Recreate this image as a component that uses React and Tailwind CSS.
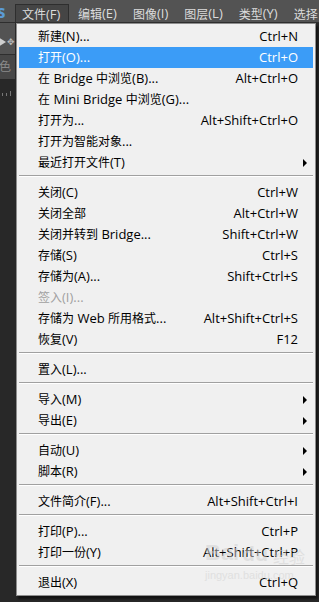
import React from "react";

const font = { fontFamily: '"Open Sans", "Noto Sans CJK SC", sans-serif' };

const menuItems = [
  { label: "新建(N)...", sc: "Ctrl+N" },
  { label: "打开(O)...", sc: "Ctrl+O", active: true },
  { label: "在 Bridge 中浏览(B)...", sc: "Alt+Ctrl+O" },
  { label: "在 Mini Bridge 中浏览(G)..." },
  { label: "打开为...", sc: "Alt+Shift+Ctrl+O" },
  { label: "打开为智能对象..." },
  { label: "最近打开文件(T)", sub: true },
  "sep",
  { label: "关闭(C)", sc: "Ctrl+W" },
  { label: "关闭全部", sc: "Alt+Ctrl+W" },
  { label: "关闭并转到 Bridge...", sc: "Shift+Ctrl+W" },
  { label: "存储(S)", sc: "Ctrl+S" },
  { label: "存储为(A)...", sc: "Shift+Ctrl+S" },
  { label: "签入(I)...", disabled: true },
  { label: "存储为 Web 所用格式...", sc: "Alt+Shift+Ctrl+S" },
  { label: "恢复(V)", sc: "F12" },
  "sep",
  { label: "置入(L)..." },
  "sep",
  { label: "导入(M)", sub: true },
  { label: "导出(E)", sub: true },
  "sep",
  { label: "自动(U)", sub: true },
  { label: "脚本(R)", sub: true },
  "sep",
  { label: "文件简介(F)...", sc: "Alt+Shift+Ctrl+I" },
  "sep",
  { label: "打印(P)...", sc: "Ctrl+P" },
  { label: "打印一份(Y)", sc: "Alt+Shift+Ctrl+P" },
  "sep",
  { label: "退出(X)", sc: "Ctrl+Q" },
];

const topMenus = ["编辑(E)", "图像(I)", "图层(L)", "类型(Y)", "选择"];

// CJK runs are set a size smaller than the latin parts, like YaHei on Windows
function Mixed({ text }) {
  const parts = text.split(/([\u3000-\u9fff]+)/).filter(Boolean);
  return parts.map((p, i) =>
    /[\u3000-\u9fff]/.test(p) ? (
      <span key={i} className="text-[12px]" style={{ fontFamily: '"Noto Sans CJK SC", sans-serif' }}>
        {p}
      </span>
    ) : (
      <span key={i}>{p}</span>
    )
  );
}

function Arrow() {
  return (
    <svg width="4" height="8" viewBox="0 0 4 8" className="ml-[5px]">
      <path d="M0 0 L4 4 L0 8 Z" fill="#000" />
    </svg>
  );
}

function MenuRow({ item }) {
  const color = item.active ? "text-white" : item.disabled ? "text-[#a0a0a0]" : "text-black";
  return (
    <div className={`h-[21px] flex items-center pl-[19px] leading-none ${item.active ? "bg-[#3b9cf7]" : ""} ${color}`}>
      <span className="flex-1 whitespace-nowrap">
        <Mixed text={item.label} />
      </span>
      {item.sc && <span className="whitespace-nowrap">{item.sc}</span>}
      <span className="w-[15px] flex items-center">{item.sub && <Arrow />}</span>
    </div>
  );
}

export default function App() {
  return (
    <div className="relative w-[319px] h-[602px] overflow-hidden bg-[#282828] text-[13px]" style={font}>
      {/* top menu bar */}
      <div className="h-[23px] bg-[#535353] border-b border-[#2e2e2e] flex items-stretch text-[#dcdcdc] leading-none">
        <div className="w-[15px] shrink-0 overflow-hidden flex items-center">
          <span className="text-[17px] font-bold text-[#5b9bd5] -ml-[3px]">s</span>
        </div>
        <div className="shrink-0 mt-[4px] w-[54px] pl-[6px] pt-[1px] flex items-center bg-[#454545] border border-b-0 border-[#2e2e2e] whitespace-nowrap">
          <Mixed text="文件(F)" />
        </div>
        {topMenus.map((m) => (
          <div key={m} className="shrink-0 pl-[9px] pr-[7px] pt-[5px] flex items-center whitespace-nowrap">
            <Mixed text={m} />
          </div>
        ))}
      </div>

      {/* left tool strip */}
      <div className="w-[15px]">
        <div className="h-[32px] bg-[#535353] border-b border-[#2e2e2e] flex items-center gap-[1px] pt-[6px]">
          <svg width="8" height="10" viewBox="0 0 8 10">
            <path d="M0 0 L8 5 L0 10 Z" fill="#cfcfcf" />
          </svg>
          <span className="text-[9px] text-[#bbbbbb] leading-none">✥</span>
        </div>
        <div className="h-[24px] bg-[#474747] text-[#8a8a8a] text-[12px] flex items-center overflow-hidden">
          <span className="-ml-[1px]">色</span>
        </div>
        <div className="h-[20px] flex items-end gap-[3px] pl-[2px] pb-[3px]">
          <div className="w-px h-[3px] bg-[#777]" />
          <div className="w-px h-[3px] bg-[#777]" />
          <div className="w-px h-[5px] bg-[#777]" />
        </div>
      </div>

      {/* File dropdown */}
      <div className="absolute left-[16px] top-[23px] w-[300px] bg-[#f0f0f0] border border-[#8e8e8e] p-[2px] shadow-[2px_3px_2px_rgba(0,0,0,0.55)]">
        {menuItems.map((item, i) =>
          item === "sep" ? (
            <div key={i} className="pt-[2px] pb-[5px]">
              <div className="h-px bg-[#a0a0a0]" />
              <div className="h-px bg-white" />
            </div>
          ) : (
            <MenuRow key={i} item={item} />
          )
        )}
      </div>

      {/* watermark */}
      <div className="absolute left-[205px] top-[542px] pointer-events-none text-[#d0d0d0] opacity-50 leading-none">
        <div className="flex items-end gap-[3px]">
          <span className="text-[22px] font-bold" style={{ fontFamily: '"Liberation Sans", sans-serif' }}>Bai</span>
          <span className="text-[20px] font-bold">du</span>
          <span className="text-[16px] ml-[2px]" style={{ fontFamily: '"Noto Sans CJK SC", sans-serif' }}>经验</span>
        </div>
        <div className="mt-[6px] text-[11px]" style={{ fontFamily: '"Liberation Sans", sans-serif' }}>jingyan.baidu.com</div>
      </div>
    </div>
  );
}
